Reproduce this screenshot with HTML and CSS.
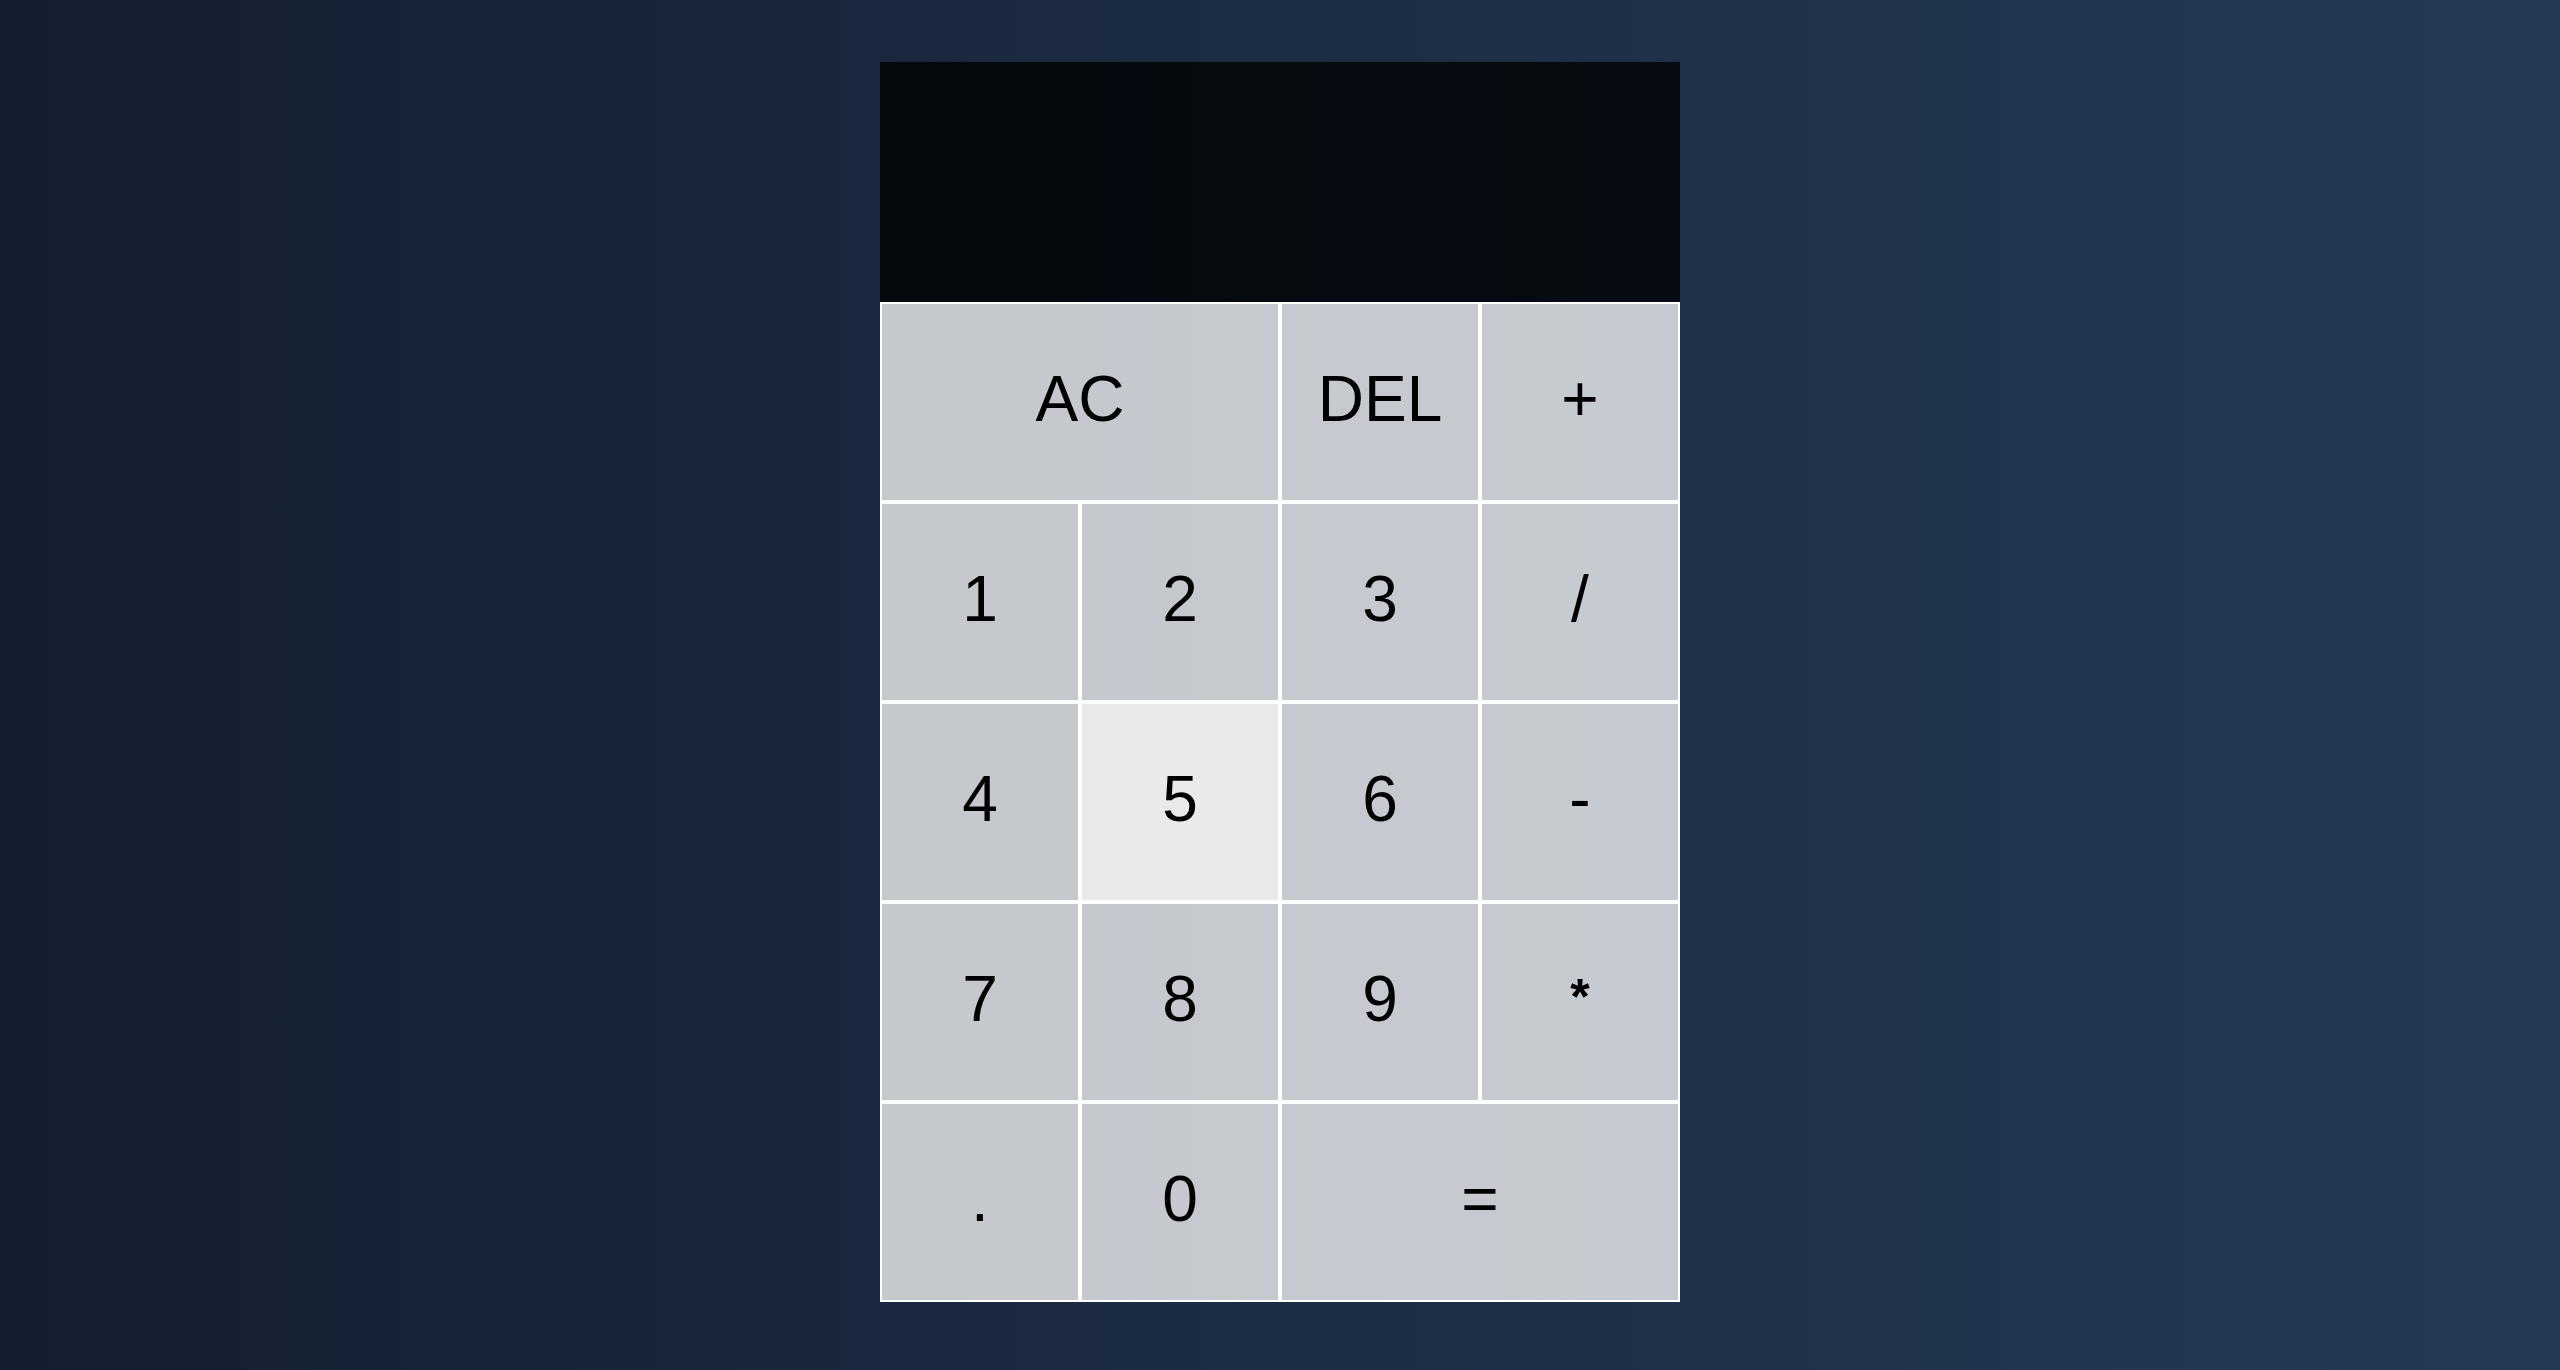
FILE: index.html
```html
<!DOCTYPE html>
<html lang="en">
<head>
<meta charset="UTF-8">
<title>Calculator</title>
<link rel="stylesheet" href="styles.css">
</head>
<body>
<div class="calculator-grid">
  <div class="output">
    <div class="previous-operand"></div>
    <div class="current-operand"></div>
  </div>
  <button class="span-two">AC</button>
  <button>DEL</button>
  <button>+</button>
  <button>1</button>
  <button>2</button>
  <button>3</button>
  <button>/</button>
  <button>4</button>
  <button class="hovered">5</button>
  <button>6</button>
  <button>-</button>
  <button>7</button>
  <button>8</button>
  <button>9</button>
  <button class="star">*</button>
  <button>.</button>
  <button>0</button>
  <button class="span-two">=</button>
</div>
</body>
</html>
```

FILE: styles.css
```css
*, *::before, *::after {
  box-sizing: border-box;
  font-family: "Liberation Sans", Arial, sans-serif;
  font-weight: normal;
}

html, body {
  margin: 0;
  padding: 0;
}

body {
  min-height: 100vh;
  background: linear-gradient(to right, #141e30, #243b55);
}

.calculator-grid {
  display: grid;
  justify-content: center;
  align-content: start;
  padding-top: 62px;
  min-height: 100vh;
  grid-template-columns: repeat(4, 200px);
  grid-template-rows: minmax(240px, auto) repeat(5, 200px);
}

.calculator-grid > button {
  cursor: pointer;
  font-size: 64px;
  border: 2px solid white;
  outline: none;
  background-color: rgba(255, 255, 255, 0.75);
  color: #000;
  padding: 0 0 6px 0;
  margin: 0;
}

.calculator-grid > button.star {
  font-size: 50px;
  font-weight: bold;
  padding-bottom: 10px;
}

.calculator-grid > button.hovered {
  background-color: rgba(255, 255, 255, 0.9);
}

.span-two {
  grid-column: span 2;
}

.output {
  grid-column: 1 / -1;
  background-color: rgba(0, 0, 0, 0.75);
  display: flex;
  align-items: flex-end;
  justify-content: space-around;
  flex-direction: column;
  padding: 20px;
  word-wrap: break-word;
  word-break: break-all;
}

.output .previous-operand {
  color: rgba(255, 255, 255, 0.75);
  font-size: 48px;
}

.output .current-operand {
  color: white;
  font-size: 80px;
}
```
